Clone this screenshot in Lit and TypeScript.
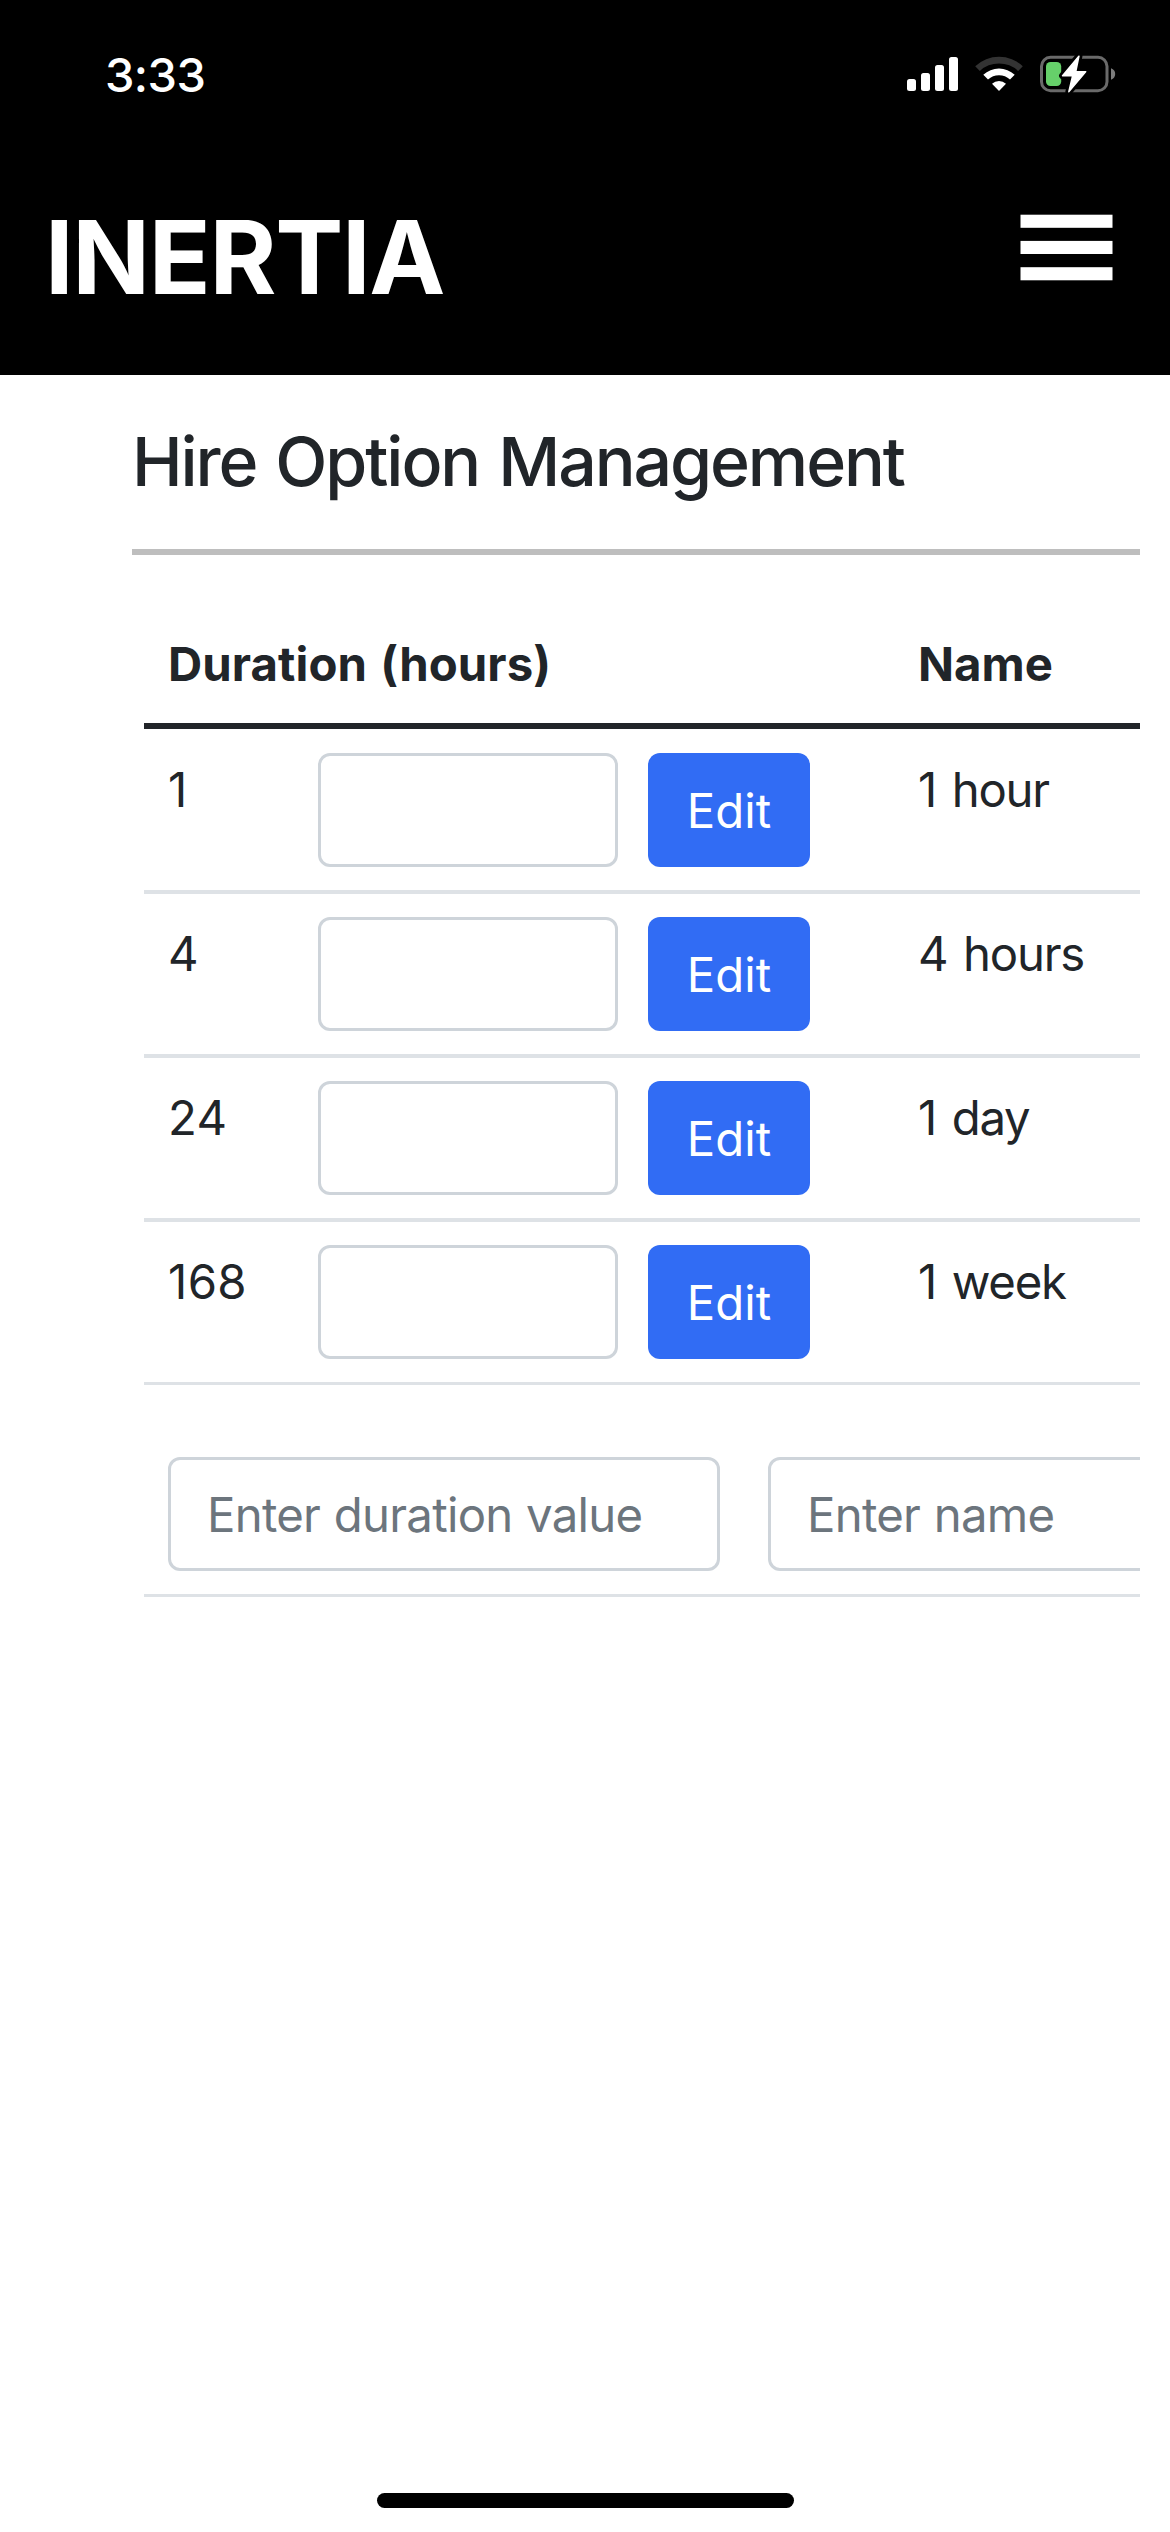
import { LitElement, html, css } from "lit";
import { customElement, property } from "lit/decorators.js";

interface HireOption {
  hours: number;
  name: string;
}

const OPTIONS: HireOption[] = [
  { hours: 1, name: "1 hour" },
  { hours: 4, name: "4 hours" },
  { hours: 24, name: "1 day" },
  { hours: 168, name: "1 week" },
];

@customElement("status-bar")
class StatusBar extends LitElement {
  static styles = css`
    :host {
      display: flex;
      justify-content: space-between;
      height: 149px;
      padding: 0 54px 0 105px;
      color: #fff;
    }
    .time {
      font-size: 47px;
      font-weight: 550;
      line-height: 149px;
      letter-spacing: -0.6px;
    }
    .icons {
      display: flex;
      gap: 17px;
      padding-top: 54px;
    }
    svg {
      display: block;
    }
  `;

  render() {
    return html`
      <span class="time">3:33</span>
      <div class="icons">
        <svg width="51" height="40" viewBox="907 54 51 40" fill="#fff">
          <rect x="907" y="79" width="9" height="12" rx="2.5" />
          <rect x="921" y="73" width="9" height="18" rx="2.5" />
          <rect x="935" y="65" width="9" height="26" rx="2.5" />
          <rect x="949" y="57" width="9" height="34" rx="2.5" />
        </svg>
        <svg width="48" height="40" viewBox="975 54 48 40">
          <path d="M975.2 66.2A34.5 34.5 0 0 1 1022.8 66.2L1018.2 71A28 28 0 0 0 979.8 71Z" fill="#333" />
          <path d="M983.3 74.8A23 23 0 0 1 1014.7 74.8L1010 79.5A16.2 16.2 0 0 0 988 79.5Z" fill="#fff" />
          <path d="M992 83.7A10.6 10.6 0 0 1 1006 83.7L999 91Z" fill="#fff" />
        </svg>
        <svg width="76" height="40" viewBox="1040 54 76 40">
          <rect x="1041.5" y="57.3" width="65.5" height="33.4" rx="9" fill="none" stroke="#6a6a6a" stroke-width="3" />
          <path d="M1111 68.3Q1115.2 70 1115.2 74T1111 79.7Z" fill="#7c7c7c" />
          <rect x="1046" y="62" width="15.2" height="24" rx="4.5" fill="#66d06a" />
          <path
            d="M1078.9 56.2L1062.6 75.7H1072.7L1068.9 91.6L1085.6 71.7H1075.7Z"
            fill="#fff"
            stroke="#000"
            stroke-width="7"
            stroke-linejoin="round"
          />
          <path
            d="M1078.9 56.2L1062.6 75.7H1072.7L1068.9 91.6L1085.6 71.7H1075.7Z"
            fill="#fff"
            stroke="#fff"
            stroke-width="1.6"
            stroke-linejoin="round"
          />
        </svg>
      </div>
    `;
  }
}

@customElement("option-row")
class OptionRow extends LitElement {
  @property({ attribute: false }) option!: HireOption;

  static styles = css`
    :host {
      display: grid;
      grid-template-columns: 150px 300px 162px 1fr;
      align-items: start;
      box-sizing: border-box;
      height: 164px;
      padding: 23px 0 0 24px;
      border-bottom: 4px solid #dee2e6;
      line-height: 73px;
    }
    .field {
      box-sizing: border-box;
      height: 114px;
      width: 300px;
      margin: 0;
      padding: 0 36px;
      border: 3px solid #ced4da;
      border-radius: 12px;
      background: #fff;
      font: inherit;
      outline: none;
    }
    .edit {
      height: 114px;
      width: 162px;
      margin: 0 0 0 30px;
      padding: 1px 0 0;
      border: 0;
      border-radius: 12px;
      background: #316cf4;
      color: #fff;
      font: inherit;
    }
    .hours {
      letter-spacing: 0.4px;
    }
    .name {
      padding-left: 138px;
      letter-spacing: -1.2px;
      word-spacing: 3.5px;
    }
  `;

  render() {
    return html`
      <span class="hours">${this.option.hours}</span>
      <input class="field" />
      <button class="edit">Edit</button>
      <span class="name">${this.option.name}</span>
    `;
  }
}

@customElement("app-root")
class AppRoot extends LitElement {
  static styles = css`
    :host {
      display: flex;
      flex-direction: column;
      box-sizing: border-box;
      height: 2532px;
      overflow: hidden;
      background: #fff;
      color: #212529;
      font-family: Inter, "Liberation Sans", sans-serif;
      font-size: 47.3px;
    }
    .top {
      height: 375px;
      background: #000;
      color: #fff;
    }
    .nav {
      display: flex;
      justify-content: space-between;
      padding: 0 57px 0 45px;
    }
    .brand {
      margin-top: 46px;
      font-size: 102px;
      font-weight: 700;
      line-height: 124px;
      letter-spacing: -1.3px;
    }
    .menu {
      display: block;
      margin-top: 65px;
    }
    .page {
      flex: 1;
      padding: 45px 30px 0 132px;
    }
    .title {
      margin: 0;
      padding-bottom: 47px;
      border-bottom: 6px solid #bebebe;
      font-size: 68px;
      font-weight: 500;
      line-height: 82px;
      letter-spacing: -2.1px;
      word-spacing: 3px;
      white-space: nowrap;
    }
    .table {
      margin-left: 12px;
      padding-top: 73px;
      overflow: hidden;
    }
    .head {
      display: grid;
      grid-template-columns: 750px 1fr;
      margin-bottom: 1px;
      padding: 0 0 23px 24px;
      border-bottom: 6px solid #212529;
      font-weight: 700;
      line-height: 72px;
    }
    .duration {
      letter-spacing: 0.1px;
      word-spacing: 2px;
    }
    option-row:last-of-type {
      height: 163px;
      border-bottom-width: 3px;
    }
    .add {
      display: flex;
      gap: 48px;
      padding: 72px 0 23px 24px;
      border-bottom: 3px solid #dee2e6;
    }
    .entry {
      flex: none;
      box-sizing: border-box;
      width: 552px;
      height: 114px;
      margin: 0;
      padding: 1px 36px 0;
      border: 3px solid #ced4da;
      border-radius: 12px;
      background: #fff;
      color: #212529;
      font: inherit;
      letter-spacing: -0.72px;
      word-spacing: 1px;
      outline: none;
    }
    .entry::placeholder {
      color: #6c757d;
      opacity: 1;
    }
    .home {
      align-self: center;
      width: 417px;
      height: 15px;
      margin-bottom: 24px;
      border-radius: 8px;
      background: #000;
    }
  `;

  render() {
    return html`
      <header class="top">
        <status-bar></status-bar>
        <div class="nav">
          <span class="brand">INERTIA</span>
          <svg class="menu" width="93" height="68" viewBox="0 0 93 68" fill="#fff">
            <rect x="0.5" y="0.7" width="92" height="13.1" />
            <rect x="0.5" y="26.9" width="92" height="13.1" />
            <rect x="0.5" y="53.2" width="92" height="13.1" />
          </svg>
        </div>
      </header>
      <main class="page">
        <h1 class="title">Hire Option Management</h1>
        <section class="table">
          <div class="head">
            <span class="duration">Duration (hours)</span>
            <span>Name</span>
          </div>
          ${OPTIONS.map((o) => html`<option-row .option=${o}></option-row>`)}
          <div class="add">
            <input class="entry" placeholder="Enter duration value" />
            <input class="entry" placeholder="Enter name" />
          </div>
        </section>
      </main>
      <div class="home"></div>
    `;
  }
}
